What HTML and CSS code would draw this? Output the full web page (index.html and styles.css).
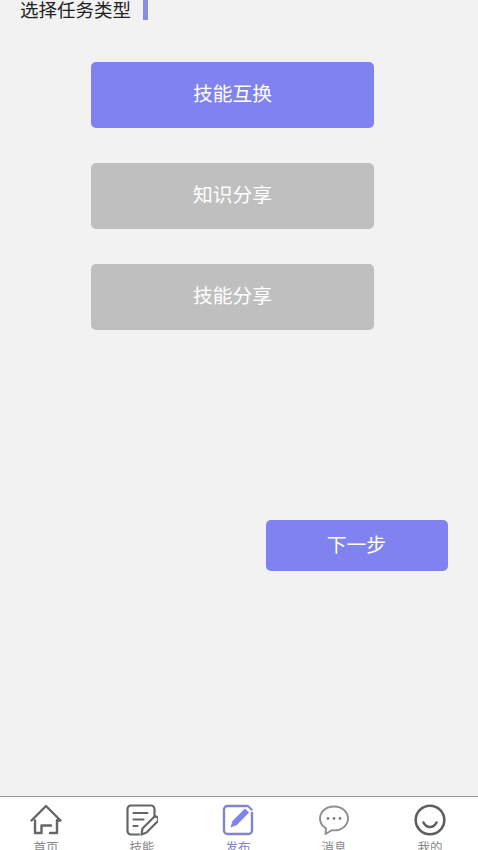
FILE: index.html
```html
<!DOCTYPE html>
<html lang="zh">
<head>
<meta charset="utf-8" />
<title>发布</title>
<link rel="stylesheet" href="styles.css">
</head>
<body>

<main class="page">
	<div class="heading">
		<h2>选择任务类型</h2>
		<span class="mark"></span>
	</div>
	<div class="types">
		<button class="type active">技能互换</button>
		<button class="type">知识分享</button>
		<button class="type">技能分享</button>
	</div>
	<div class="actions">
		<button class="next">下一步</button>
	</div>
</main>

<nav class="tabbar">
	<div class="tab">
		<svg viewBox="0 0 32 32" fill="none" stroke="#666" stroke-width="2.4" stroke-linecap="round" stroke-linejoin="round">
			<path d="M1.500 16.500 16 2l14.500 14.500H27"/>
			<path d="M5 16.500V29h6.500v-7.500h9.500"/>
			<path d="M27 16.500V29h-7"/>
		</svg>
		<span>首页</span>
	</div>
	<div class="tab">
		<svg viewBox="0 0 32 32" fill="none" stroke="#666" stroke-width="2.2" stroke-linecap="round" stroke-linejoin="round">
			<path d="M13 30.500H5a3.500 3.500 0 0 1-3.500-3.500V5A3.500 3.500 0 0 1 5 1.500h20A3.500 3.500 0 0 1 28.500 5v6.500"/>
			<path d="M7.500 9h14M7.500 15.500h10M7.500 22h4"/>
			<path d="M15.500 30.500l1-6 11-11a2.800 2.800 0 0 1 4 4l-11 11z"/>
		</svg>
		<span>技能</span>
	</div>
	<div class="tab current">
		<svg viewBox="0 0 32 32" fill="none" stroke="#8084c8" stroke-width="2.4" stroke-linecap="round" stroke-linejoin="round">
			<path d="M25 2H5.500A3.500 3.500 0 0 0 2 5.500v21A3.500 3.500 0 0 0 5.500 30h21a3.500 3.500 0 0 0 3.500-3.500V9"/>
			<path d="M8.500 23.500l2-6.500L23 4.500l4 4L15 21z" fill="#7f83ea" stroke="none"/>
			<path d="M25 2.500l1.500-1.500 4.500 4.500L29.500 7z" fill="#7f83ea" stroke="none"/>
		</svg>
		<span>发布</span>
	</div>
	<div class="tab">
		<svg viewBox="0 0 32 32" fill="none" stroke="#8f8f8f" stroke-width="1.9" stroke-linecap="round" stroke-linejoin="round">
			<path d="M16 2.500C8 2.500 2 7.800 2 14.500c0 4.200 2.300 7.700 6 9.800l-.5 5.700 6.300-3.800c.7.100 1.500.2 2.200.2 8 0 14-5.300 14-11.900S24 2.500 16 2.500z"/>
			<circle cx="10" cy="14.500" r="1.400" fill="#808080" stroke="none"/>
			<circle cx="16" cy="14.500" r="1.400" fill="#808080" stroke="none"/>
			<circle cx="22" cy="14.500" r="1.400" fill="#808080" stroke="none"/>
		</svg>
		<span>消息</span>
	</div>
	<div class="tab">
		<svg viewBox="0 0 32 32" fill="none" stroke="#5f5f5f" stroke-width="2.6" stroke-linecap="round">
			<circle cx="16" cy="16" r="14.300"/>
			<path d="M9.500 18.500c1.500 3 3.800 4.500 6.500 4.500s5-1.500 6.500-4.500"/>
		</svg>
		<span>我的</span>
	</div>
</nav>

</body>
</html>
```

FILE: styles.css
```css
html, body {
	margin: 0;
	height: 850px;
	overflow: hidden;
}
body {
	display: flex;
	flex-direction: column;
	background: #f2f2f3;
	font-family: "Noto Sans CJK SC", "Liberation Sans", sans-serif;
}
button {
	border: none;
	color: #fff;
	font: inherit;
	padding: 0;
}

/* --------------------------------- */

.page {
	flex: 1;
}
.heading {
	display: flex;
	align-items: flex-start;
	height: 20px;
	padding-left: 20px;
}
.heading h2 {
	margin: 0 12px 0 0;
	font-size: 18.5px;
	font-weight: 400;
	line-height: 18px;
	color: #222;
}
.mark {
	width: 5px;
	height: 20px;
	background: #8a8ce0;
}

/* --------------------------------- */

.types {
	display: flex;
	flex-direction: column;
	gap: 35px;
	width: 283px;
	margin: 42px 0 0 91px;
}
.type {
	height: 66px;
	padding-bottom: 5px;
	border-radius: 5px;
	background: #bfbfbf;
	font-size: 19.75px;
}
.type.active {
	background: #8083ef;
}

/* --------------------------------- */

.actions {
	display: flex;
	justify-content: flex-end;
	margin-top: 190px;
	padding-right: 30.5px;
}
.next {
	width: 182px;
	height: 51px;
	padding-bottom: 4px;
	border-radius: 5px;
	background: #8083ef;
	font-size: 19.75px;
}

/* --------------------------------- */

.tabbar {
	display: flex;
	height: 53px;
	margin-left: -2px;
	border-top: 1px solid #9a9a9a;
	background: #fff;
	overflow: hidden;
}
.tab {
	flex: none;
	width: 96px;
	display: flex;
	flex-direction: column;
	align-items: center;
	padding-top: 7px;
	color: #888;
	font-size: 12.5px;
	line-height: 16px;
}
.tab svg {
	flex: none;
	width: 32px;
	height: 32px;
}
.tab span {
	margin-top: 3px;
}
.tab.current {
	color: #7f83c9;
}
```
